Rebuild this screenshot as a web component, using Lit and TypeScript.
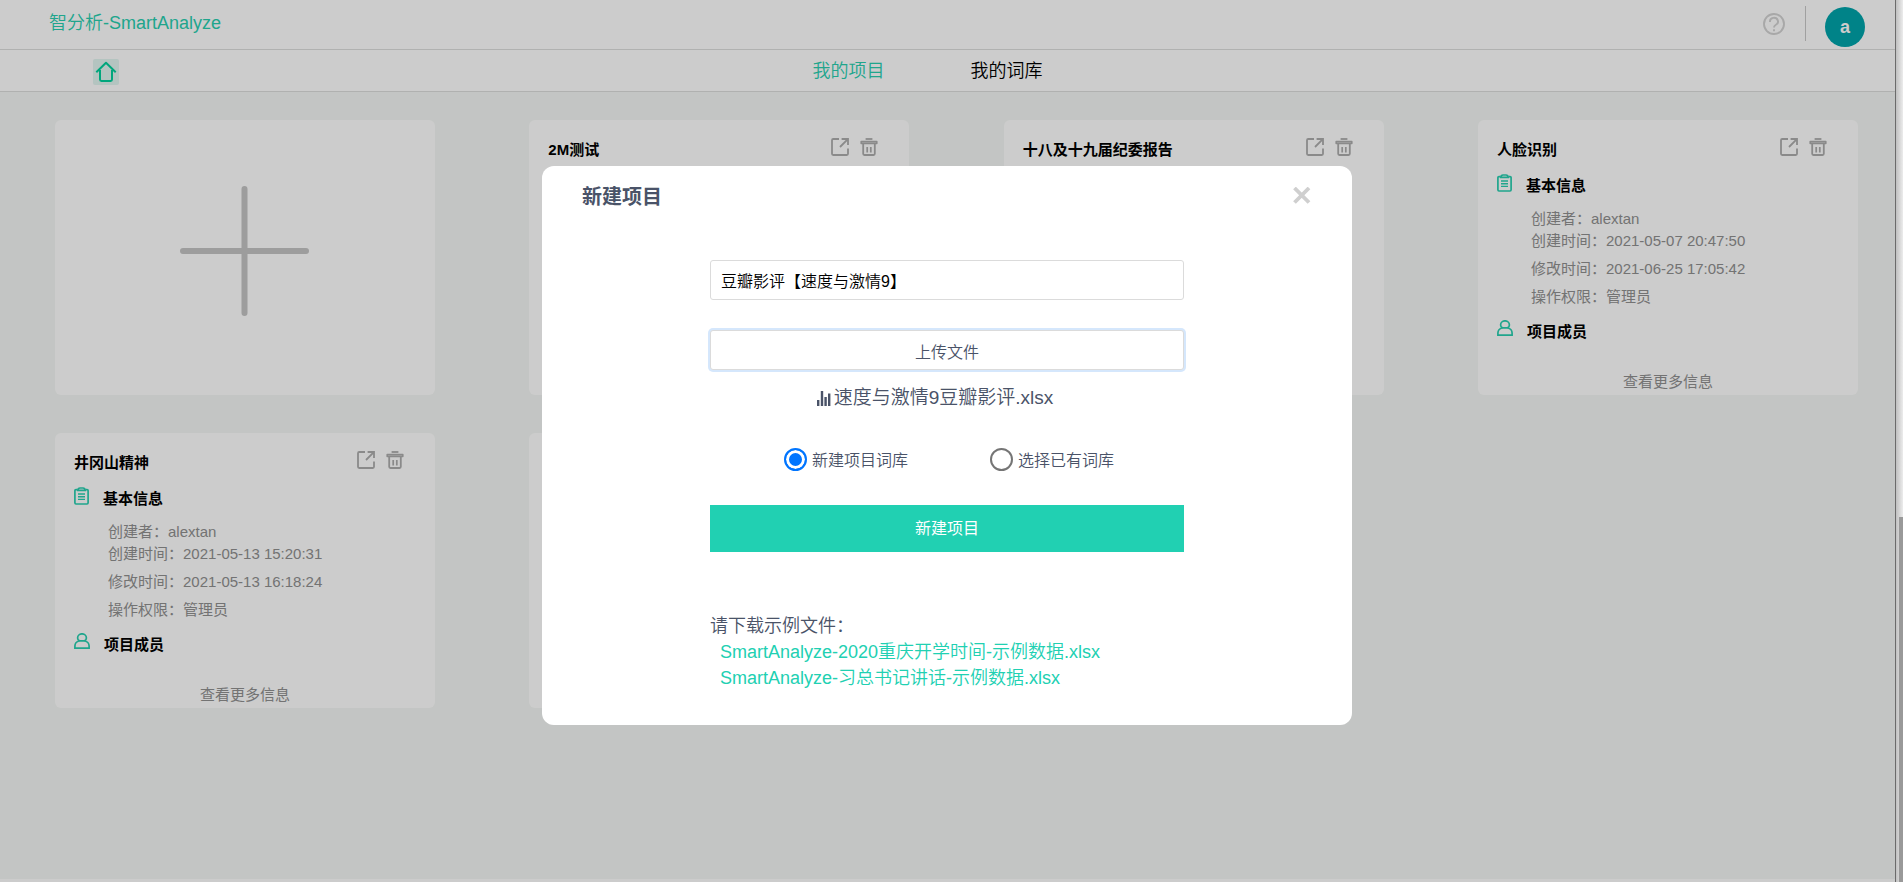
import { LitElement, html, css, svg, nothing } from "lit";
import { customElement, property, state } from "lit/decorators.js";

interface Project {
  name: string;
  creator?: string;
  created?: string;
  modified?: string;
  role?: string;
}

const PROJECTS: Project[] = [
  { name: "2M测试" },
  { name: "十八及十九届纪委报告" },
  {
    name: "人脸识别",
    creator: "alextan",
    created: "2021-05-07 20:47:50",
    modified: "2021-06-25 17:05:42",
    role: "管理员",
  },
  {
    name: "井冈山精神",
    creator: "alextan",
    created: "2021-05-13 15:20:31",
    modified: "2021-05-13 16:18:24",
    role: "管理员",
  },
  { name: "" },
];

const SAMPLES = [
  "SmartAnalyze-2020重庆开学时间-示例数据.xlsx",
  "SmartAnalyze-习总书记讲话-示例数据.xlsx",
];

const shared = css`
  *,
  *::before,
  *::after {
    box-sizing: border-box;
  }
  button {
    border: 0;
    padding: 0;
    background: none;
    font: inherit;
    color: inherit;
    cursor: pointer;
  }
  a {
    color: inherit;
    text-decoration: none;
  }
  svg {
    display: block;
  }
  h2,
  h3,
  p,
  dl,
  dd,
  ul {
    margin: 0;
    padding: 0;
  }
`;

const exportIcon = svg`<svg width="18" height="18" viewBox="0 0 18 18" fill="none" stroke="currentColor" stroke-width="1.8" aria-hidden="true">
  <path d="M8 1H2.2Q1 1 1 2.2V15.8Q1 17 2.2 17H15.8Q17 17 17 15.8V10.5"/>
  <path d="M10.6 1H17V7M16.6 1.4L9 9"/>
</svg>`;

const trashIcon = svg`<svg width="18" height="18" viewBox="0 0 18 18" fill="none" stroke="currentColor" aria-hidden="true">
  <path d="M5.6 1H12.4" stroke-width="1.8"/>
  <path d="M1.2 3.5H16.8V5.4H1.2Z" stroke-width="1.6" stroke-linejoin="round"/>
  <path d="M3.2 6V15.8Q3.2 17 4.4 17H13.6Q14.8 17 14.8 15.8V6" stroke-width="1.8"/>
  <path d="M7.2 9V14.4M10.8 9V14.4" stroke-width="1.7"/>
</svg>`;

const clipboardIcon = svg`<svg width="15" height="18" viewBox="0 0 15 18" fill="none" stroke="currentColor" stroke-width="1.7" aria-hidden="true">
  <path d="M3.5 2.6H2Q.9 2.6 .9 3.8V15.8Q.9 17 2 17H13Q14.1 17 14.1 15.8V3.8Q14.1 2.6 13 2.6H11.5"/>
  <path d="M3.8 3.4Q4 1 6 1H9Q11 1 11.2 3.4Z"/>
  <path d="M4 7H11M4 9.7H11M4 12.4H11" stroke-width="1.4"/>
</svg>`;

const personIcon = svg`<svg width="16" height="16" viewBox="0 0 16 16" fill="none" stroke="currentColor" stroke-width="1.7" aria-hidden="true">
  <path d="M5.4 7.8Q3.6 6.6 3.6 4.9A4.4 4.1 0 0 1 12.4 4.9Q12.4 6.6 10.6 7.8Z"/>
  <path d="M5.4 7.8Q1 9 .9 13V15.1H15.1V13Q15 9 10.6 7.8"/>
</svg>`;

@customElement("project-card")
class ProjectCard extends LitElement {
  @property({ attribute: false }) project!: Project;

  static styles = [
    shared,
    css`
      :host {
        display: flex;
        flex-direction: column;
        min-height: 275px;
        padding: 18px 19px 2px;
        border-radius: 6px;
        background: #fff;
        font-size: 15px;
        line-height: 22px;
      }
      .head {
        display: flex;
        align-items: flex-start;
        gap: 11px;
        padding-right: 12px;
      }
      .name {
        flex: 1;
        padding-top: 1px;
        font-size: 15px;
        color: #000;
      }
      .tool {
        color: #adadad;
      }
      .section {
        display: flex;
        align-items: flex-start;
        gap: 14px;
        margin-top: 13px;
        color: #28cfb0;
      }
      .section h3 {
        font-size: 15px;
        color: #000;
        padding-top: 1px;
      }
      .facts {
        padding: 11px 0 0 34px;
        color: #909090;
      }
      .fact {
        display: flex;
        margin-bottom: 6px;
      }
      .fact:first-child {
        margin-bottom: 0;
      }
      .members {
        margin-top: 6px;
      }
      .more {
        margin-top: auto;
        align-self: center;
        color: #909090;
      }
    `,
  ];

  render() {
    const p = this.project;
    if (!p.name) return nothing;
    return html`
      <div class="head">
        <h2 class="name">${p.name}</h2>
        <button class="tool" aria-label="导出">${exportIcon}</button>
        <button class="tool" aria-label="删除">${trashIcon}</button>
      </div>
      ${p.creator
        ? html`
            <div class="section">${clipboardIcon}<h3>基本信息</h3></div>
            <dl class="facts">
              <div class="fact"><dt>创建者：</dt><dd>${p.creator}</dd></div>
              <div class="fact"><dt>创建时间：</dt><dd>${p.created}</dd></div>
              <div class="fact"><dt>修改时间：</dt><dd>${p.modified}</dd></div>
              <div class="fact"><dt>操作权限：</dt><dd>${p.role}</dd></div>
            </dl>
            <div class="section members">${personIcon}<h3>项目成员</h3></div>
            <a class="more" href="#more">查看更多信息</a>
          `
        : nothing}
    `;
  }
}

@customElement("new-project-dialog")
class NewProjectDialog extends LitElement {
  @state() private lexicon = "new";

  static styles = [
    shared,
    css`
      :host {
        display: block;
        width: 810px;
        max-width: 100%;
        padding: 14px 40px 34px;
        border-radius: 12px;
        background: #fff;
        color: #4a5368;
        font-size: 16px;
        font-weight: 350;
        line-height: 26px;
      }
      .head {
        display: flex;
        align-items: center;
        justify-content: space-between;
        height: 32px;
      }
      .head h2 {
        padding-top: 2px;
        font-size: 20px;
      }
      .close {
        color: #cfcfcf;
      }
      .body {
        width: 474px;
        max-width: 100%;
        margin: 48px auto 0;
      }
      .field,
      .upload {
        display: block;
        width: 100%;
        height: 40px;
        border: 1px solid #dbdbdb;
        border-radius: 3px;
        background: #fff;
      }
      .field {
        padding: 0 10px;
        font: inherit;
        color: #000;
        outline: none;
      }
      .upload {
        margin-top: 30px;
        padding-top: 5px;
        box-shadow: 0 0 0 2px #d5e7fc;
      }
      .file {
        display: flex;
        align-items: center;
        justify-content: center;
        gap: 3px;
        margin-top: 15px;
        padding-right: 24px;
        font-size: 19px;
      }
      .choices {
        display: flex;
        gap: 82px;
        padding-left: 74px;
        margin-top: 37px;
      }
      .choice {
        display: flex;
        align-items: flex-start;
        gap: 5px;
      }
      .radio {
        appearance: none;
        width: 23px;
        height: 23px;
        margin: 0;
        border: 2px solid #757575;
        border-radius: 50%;
        background: #fff;
      }
      .radio:checked {
        border-color: #0075ff;
        background: #0075ff;
        box-shadow: inset 0 0 0 3px #fff;
      }
      .submit {
        display: block;
        width: 100%;
        height: 47px;
        margin-top: 31px;
        background: #21d0b2;
        color: #fff;
        font-weight: 400;
      }
      .samples {
        margin-top: 61px;
        font-size: 18px;
      }
      .samples ul {
        padding-left: 10px;
        list-style: none;
        color: #21d0b2;
      }
    `,
  ];

  private choice(value: string, label: string) {
    return html`<label class="choice">
      <input
        class="radio"
        type="radio"
        name="lexicon"
        .checked=${this.lexicon === value}
        @change=${() => (this.lexicon = value)}
      />
      <span>${label}</span>
    </label>`;
  }

  render() {
    return html`
      <div class="head">
        <h2>新建项目</h2>
        <button class="close" aria-label="关闭">
          <svg width="19" height="18" viewBox="0 0 19 18" fill="none" stroke="currentColor" stroke-width="3.8">
            <path d="M1.5 1L16 15.5M16 1L1.5 15.5" />
          </svg>
        </button>
      </div>
      <div class="body">
        <input class="field" aria-label="项目名称" value="豆瓣影评【速度与激情9】" />
        <button class="upload">上传文件</button>
        <p class="file">
          <svg width="14" height="15" viewBox="0 0 14 15" fill="currentColor" aria-hidden="true">
            <path d="M0 9h2.4v6H0zM3.8 0h2.4v15H3.8zM7.4 6h2.4v9H7.4zM11 2.4h2.4V15H11z" />
          </svg>
          速度与激情9豆瓣影评.xlsx
        </p>
        <div class="choices">
          ${this.choice("new", "新建项目词库")} ${this.choice("existing", "选择已有词库")}
        </div>
        <button class="submit">新建项目</button>
        <div class="samples">
          <p>请下载示例文件：</p>
          <ul>
            ${SAMPLES.map((s) => html`<li><a href="#sample">${s}</a></li>`)}
          </ul>
        </div>
      </div>
    `;
  }
}

@customElement("app-root")
class AppRoot extends LitElement {
  static styles = [
    shared,
    css`
      :host {
        display: grid;
        grid-template-columns: minmax(0, 1fr) 8px;
        min-height: 100vh;
        font-family: "Liberation Sans", Arial, "Noto Sans CJK SC", sans-serif;
      }
      .page {
        display: flex;
        flex-direction: column;
        background: #fff;
        padding-bottom: 3px;
      }
      .top {
        display: flex;
        align-items: flex-start;
        height: 50px;
        padding: 6px 30px 0 49px;
        border-bottom: 1px solid #dcdedd;
      }
      .brand {
        flex: 1;
        padding-top: 4px;
        font-size: 18px;
        font-weight: 350;
        line-height: 26px;
        color: #28cfb0;
      }
      .help {
        margin-top: 7px;
        color: #d2d2d2;
      }
      .rule {
        width: 1px;
        height: 35px;
        margin: 0 19px 0 20px;
        background: #c8c8c8;
      }
      .avatar {
        width: 40px;
        height: 40px;
        margin-top: 1px;
        border-radius: 50%;
        background: #00a4ab;
        color: #fff;
        font-size: 18px;
        font-weight: bold;
      }
      .nav {
        display: grid;
        grid-template-columns: 1fr auto 1fr;
        align-items: center;
        height: 42px;
        padding: 0 40px 0 93px;
        border-bottom: 1px solid #dcdedd;
        font-size: 18px;
        font-weight: 350;
        line-height: 26px;
      }
      .home {
        display: block;
        width: 26px;
        height: 26px;
        margin-top: 2px;
        border-radius: 2px;
        background: #e2f5f1;
        color: #00d09b;
      }
      .tabs {
        display: flex;
        gap: 86px;
        margin-left: -93px;
      }
      .tab {
        color: #000;
      }
      .tab.current {
        color: #28cfb0;
      }
      .projects {
        flex: 1;
        display: grid;
        grid-template-columns: repeat(auto-fill, 380px);
        justify-content: space-between;
        align-content: start;
        gap: 38px 90px;
        padding: 28px 37px 28px 55px;
        background: #f4f7f5;
      }
      .add {
        display: grid;
        place-items: center;
        min-height: 275px;
        padding-bottom: 13px;
        border-radius: 6px;
        background: #fff;
        color: #c5c5c5;
      }
      .overlay {
        position: fixed;
        inset: 0 8px 0 0;
        display: flex;
        align-items: flex-start;
        justify-content: center;
        padding: 166px 1px 0 0;
        background: rgba(0, 0, 0, 0.2);
      }
      .scroll {
        display: flex;
        padding-left: 3px;
        border-left: 1px solid #6b6b6b;
        background: linear-gradient(90deg, #c0c0c0, #ececec);
      }
      .thumb {
        flex: 1;
        margin-top: 517px;
        background: #999;
      }
    `,
  ];

  render() {
    return html`
      <div class="page">
        <header class="top">
          <a class="brand" href="#home">智分析-SmartAnalyze</a>
          <button class="help" aria-label="帮助">
            <svg width="22" height="22" viewBox="0 0 22 22" fill="none" stroke="currentColor" stroke-width="1.9">
              <circle cx="11" cy="11" r="10" />
              <path d="M7 9A4 3.8 0 1 1 12.6 12Q11 12.8 11 14.6" />
              <path d="M11 16.2V18.2" />
            </svg>
          </button>
          <span class="rule"></span>
          <button class="avatar">a</button>
        </header>
        <nav class="nav">
          <a class="home" href="#home" aria-label="首页">
            <svg width="26" height="26" viewBox="0 0 26 26" fill="none" stroke="currentColor" stroke-width="2" stroke-linejoin="round">
              <path d="M3.3 13.2L13 3.8L22.7 13.2M7 11V20.6Q7 22 8.4 22H17.6Q19 22 19 20.6V11" />
            </svg>
          </a>
          <div class="tabs">
            <a class="tab current" href="#projects">我的项目</a>
            <a class="tab" href="#lexicons">我的词库</a>
          </div>
        </nav>
        <main class="projects">
          <button class="add" aria-label="添加项目">
            <svg width="130" height="130" viewBox="0 0 130 130" stroke="currentColor" stroke-width="6" stroke-linecap="round">
              <path d="M64.5 3V127M3 65H126" />
            </svg>
          </button>
          ${PROJECTS.map((p) => html`<project-card .project=${p}></project-card>`)}
        </main>
      </div>
      <div class="scroll"><span class="thumb"></span></div>
      <div class="overlay">
        <new-project-dialog role="dialog" aria-label="新建项目"></new-project-dialog>
      </div>
    `;
  }
}
